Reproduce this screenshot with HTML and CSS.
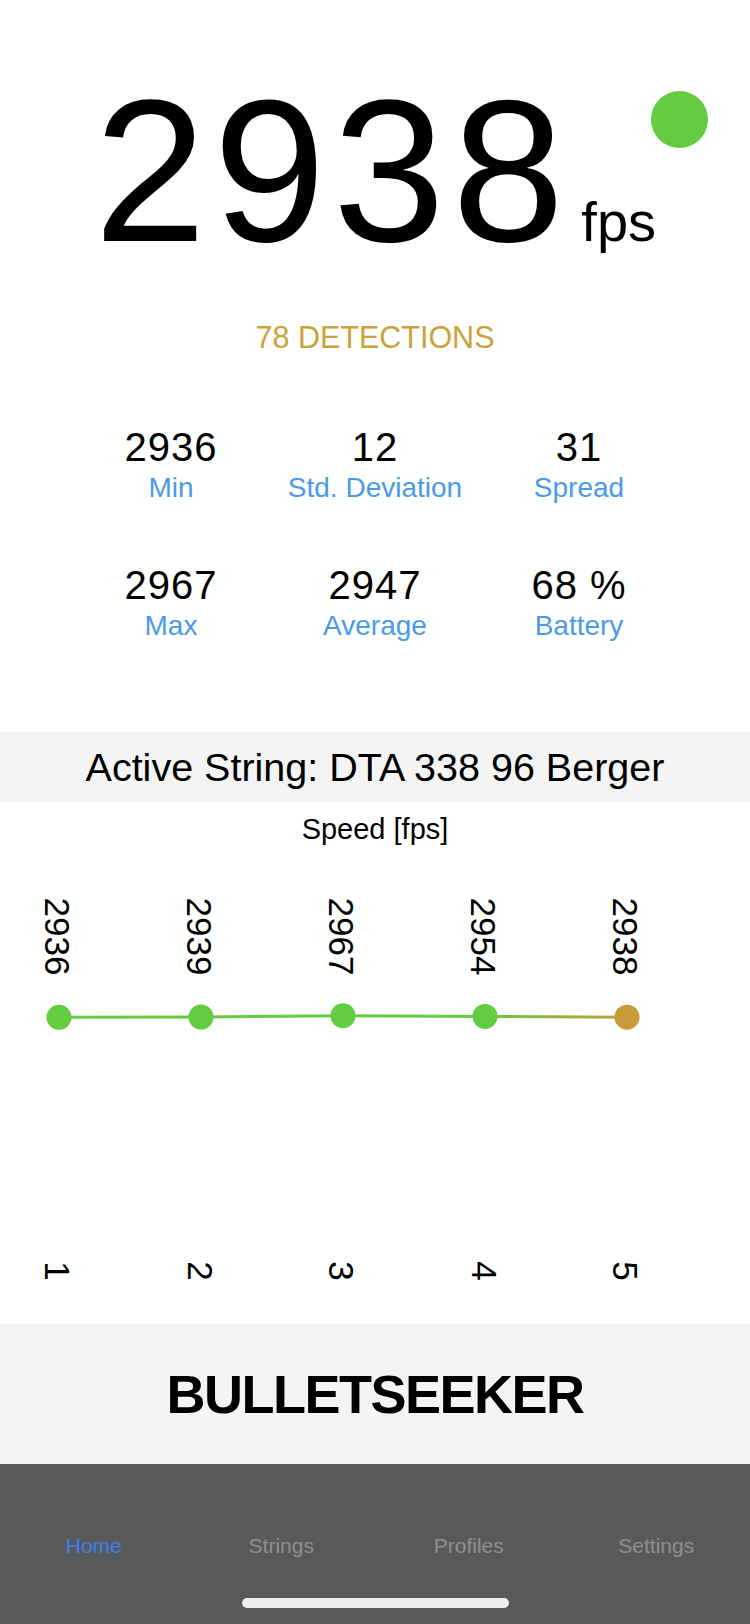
FILE: index.html
```html
<!DOCTYPE html>
<html lang="en">
  <head>
    <meta charset="UTF-8" />
    <meta name="viewport" content="width=device-width, initial-scale=1.0" />
    <title>Bulletseeker</title>
    <link rel="stylesheet" href="styles.css">
  </head>
  <body>
    <div class="screen">
      <section class="reading">
        <div class="speed">
          <span class="speed-value">2938</span>
          <span class="speed-unit">fps</span>
        </div>
        <span class="status-dot"></span>
        <p class="detections">78 DETECTIONS</p>
      </section>

      <section class="stats">
        <div class="stat">
          <span class="stat-value">2936</span>
          <span class="stat-label">Min</span>
        </div>
        <div class="stat">
          <span class="stat-value">12</span>
          <span class="stat-label">Std. Deviation</span>
        </div>
        <div class="stat">
          <span class="stat-value">31</span>
          <span class="stat-label">Spread</span>
        </div>
        <div class="stat">
          <span class="stat-value">2967</span>
          <span class="stat-label">Max</span>
        </div>
        <div class="stat">
          <span class="stat-value">2947</span>
          <span class="stat-label">Average</span>
        </div>
        <div class="stat">
          <span class="stat-value">68 %</span>
          <span class="stat-label">Battery</span>
        </div>
      </section>

      <div class="active-string">Active String: DTA 338 96 Berger</div>

      <section class="chart">
        <h2 class="chart-title">Speed [fps]</h2>
        <svg class="chart-plot" width="750" height="478" viewBox="0 0 750 478">
          <defs>
            <linearGradient id="lastShot" x1="485" y1="0" x2="627" y2="0" gradientUnits="userSpaceOnUse">
              <stop offset="0" stop-color="#63cc40" />
              <stop offset="1" stop-color="#c89b38" />
            </linearGradient>
          </defs>
          <g class="shot-values">
            <text transform="translate(44.5,51.5) rotate(90)">2936</text>
            <text transform="translate(186.5,51.5) rotate(90)">2939</text>
            <text transform="translate(328.5,51.5) rotate(90)">2967</text>
            <text transform="translate(470.5,51.5) rotate(90)">2954</text>
            <text transform="translate(612.5,51.5) rotate(90)">2938</text>
          </g>
          <polyline class="shot-line" points="59,171.3 201,171.1 343,169.7 485,170.4" />
          <line x1="485" y1="170.4" x2="627" y2="171.2" stroke="url(#lastShot)" stroke-width="3" />
          <g class="shot-dots">
            <circle cx="59" cy="171.3" r="12.5" />
            <circle cx="201" cy="171.1" r="12.5" />
            <circle cx="343" cy="169.7" r="12.5" />
            <circle cx="485" cy="170.4" r="12.5" />
          </g>
          <circle class="shot-last" cx="627" cy="171.2" r="12.5" />
          <g class="shot-numbers">
            <text transform="translate(45,425) rotate(90)">1</text>
            <text transform="translate(188,425) rotate(90)">2</text>
            <text transform="translate(329,425) rotate(90)">3</text>
            <text transform="translate(472,425) rotate(90)">4</text>
            <text transform="translate(613,425) rotate(90)">5</text>
          </g>
        </svg>
      </section>

      <div class="brand">BULLETSEEKER</div>

      <nav class="tabbar">
        <div class="tabs">
          <a class="tab active">Home</a>
          <a class="tab">Strings</a>
          <a class="tab">Profiles</a>
          <a class="tab">Settings</a>
        </div>
        <span class="home-indicator"></span>
      </nav>
    </div>
  </body>
</html>
```

FILE: styles.css
```css
body {
  margin: 0;
  font-family: "Liberation Sans", Arial, sans-serif;
  background-color: #ffffff;
  color: #000000;
}
.screen {
  width: 750px;
  height: 1624px;
  display: flex;
  flex-direction: column;
  overflow: hidden;
}
.reading {
  position: relative;
  padding-top: 70px;
  display: flex;
  flex-direction: column;
  align-items: center;
}
.speed {
  display: flex;
  align-items: baseline;
  gap: 10px;
  line-height: 1;
}
.speed-value {
  font-size: 202px;
  letter-spacing: 7px;
}
.speed-unit {
  font-size: 56px;
}
.status-dot {
  position: absolute;
  top: 91px;
  right: 42px;
  width: 57px;
  height: 57px;
  border-radius: 50%;
  background-color: #63cc40;
}
.detections {
  margin: 47px 0 0;
  font-size: 30.5px;
  line-height: 36px;
  color: #c9a23a;
}
.stats {
  margin: 69px auto 0;
  width: 612px;
  display: grid;
  grid-template-columns: repeat(3, 1fr);
  row-gap: 57px;
}
.stat {
  display: flex;
  flex-direction: column;
  align-items: center;
}
.stat-value {
  font-size: 40px;
  line-height: 46px;
  letter-spacing: 1px;
}
.stat-label {
  margin-top: 1px;
  font-size: 28px;
  line-height: 34px;
  color: #4a9ae8;
}
.active-string {
  margin-top: 89px;
  height: 70px;
  line-height: 70px;
  text-align: center;
  font-size: 39.5px;
  background-color: #f4f4f4;
}
.chart {
  display: flex;
  flex-direction: column;
  align-items: center;
}
.chart-title {
  margin: 10px 0 0;
  font-size: 29px;
  line-height: 34px;
  font-weight: normal;
}
.chart-plot {
  display: block;
}
.chart-plot text {
  font-family: "Liberation Sans", Arial, sans-serif;
  font-size: 35px;
  fill: #000000;
}
.shot-numbers text {
  text-anchor: middle;
}
.shot-line {
  fill: none;
  stroke: #63cc40;
  stroke-width: 3;
}
.shot-dots circle {
  fill: #63cc40;
}
.shot-last {
  fill: #c89b38;
}
.brand {
  height: 140px;
  display: flex;
  align-items: center;
  justify-content: center;
  background-color: #f4f4f4;
  font-size: 54px;
  font-weight: bold;
  letter-spacing: -1.5px;
}
.tabbar {
  flex: 1;
  display: flex;
  flex-direction: column;
  align-items: center;
  background-color: #595959;
}
.tabs {
  margin-top: 70px;
  width: 100%;
  display: grid;
  grid-template-columns: repeat(4, 1fr);
}
.tab {
  text-align: center;
  font-size: 21px;
  line-height: 24px;
  color: #8f8f8f;
}
.tab.active {
  color: #3a82f0;
}
.home-indicator {
  margin-top: 40px;
  width: 267px;
  height: 10px;
  border-radius: 5px;
  background-color: #eeeeee;
}
```
